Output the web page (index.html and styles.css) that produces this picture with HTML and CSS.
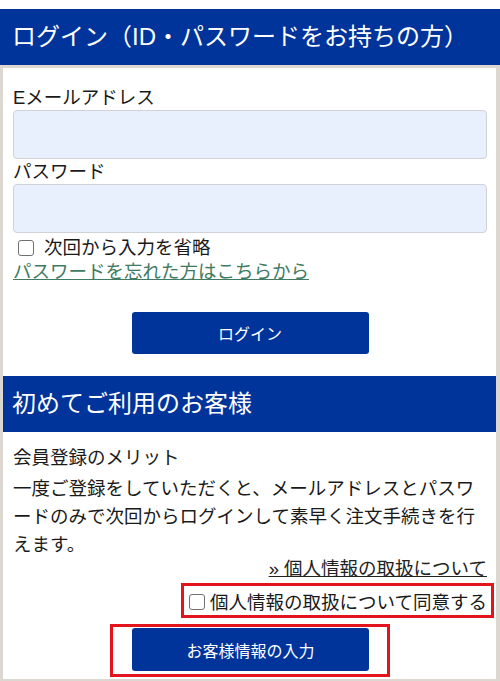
FILE: index.html
```html
<!DOCTYPE html>
<html lang="ja">
<head>
    <meta charset="UTF-8">
    <meta name="viewport" content="width=device-width, initial-scale=1.0">
    <title>ログイン</title>
    <link rel="stylesheet" href="styles.css">
</head>
<body>
<div class="top"></div>
<h2 class="head">ログイン（ID・パスワードをお持ちの方）</h2>
<div class="panel">
    <form class="login">
        <label class="fieldLabel" for="email">Eメールアドレス</label>
        <input id="email" class="field" type="email">
        <label class="fieldLabel" for="pass">パスワード</label>
        <input id="pass" class="field" type="password">
        <label class="remember"><input type="checkbox" class="check">次回から入力を省略</label>
        <a class="forgot" href="#">パスワードを忘れた方はこちらから</a>
        <div class="btnRow login-btn"><button type="button" class="btn">ログイン</button></div>
    </form>
    <h2 class="head headSub">初めてご利用のお客様</h2>
    <div class="guest">
        <p class="meritTitle">会員登録のメリット</p>
        <p class="meritText">一度ご登録をしていただくと、メールアドレスとパスワードのみで次回からログインして素早く注文手続きを行えます。</p>
        <p class="policy"><a href="#">» 個人情報の取扱について</a></p>
        <div class="agreeRow">
            <label class="agree mark"><input type="checkbox" class="check">個人情報の取扱について同意する</label>
        </div>
        <div class="btnRow">
            <div class="mark markBtn"><button type="button" class="btn btnTall">お客様情報の入力</button></div>
        </div>
    </div>
</div>
</body>
</html>
```

FILE: styles.css
```css
body {
    margin: 0;
    background: #dcd8d1;
    font-family: "Liberation Sans", "Noto Sans CJK JP", sans-serif;
    font-size: 18.5px;
    color: #1a1a1a;
}
.top {
    height: 9px;
    background: #fff;
}
.head {
    margin: 0;
    height: 56px;
    padding-left: 12px;
    background: #00349b;
    color: #fff;
    font-size: 24px;
    font-weight: normal;
    line-height: 56px;
    white-space: nowrap;
}
.panel {
    margin: 3px 4px 0 3px;
    padding-bottom: 2px;
    background: #fff;
}
.login {
    padding: 17px 9px 0 10px;
}
.fieldLabel {
    display: block;
    line-height: 25px;
}
.field {
    display: block;
    box-sizing: border-box;
    width: 100%;
    height: 49px;
    margin: 0;
    background: #e8f0fe;
    border: 1px solid #cfd2d6;
    border-radius: 4px;
}
.remember {
    display: flex;
    align-items: center;
    height: 26px;
    padding-left: 5px;
}
.remember .check {
    margin: 3px 10px 0 0;
}
.check {
    -webkit-appearance: none;
    appearance: none;
    flex: none;
    width: 16px;
    height: 16px;
    margin: 0;
    background: #fff;
    border: 1.5px solid #707070;
    border-radius: 3px;
}
.forgot {
    display: inline-block;
    line-height: 26px;
    color: #3f7b62;
}
.btnRow {
    display: flex;
    justify-content: center;
}
.login-btn {
    padding: 27px 0 22px;
}
.btn {
    width: 237px;
    height: 42px;
    margin: 0;
    background: #00349b;
    border: 0;
    border-radius: 3px;
    color: #fff;
    font-family: inherit;
    font-size: 16px;
}
.btnTall {
    height: 43px;
}
.headSub {
    padding-left: 9px;
}
.guest {
    padding: 13px 9px 0 10px;
}
.guest p {
    margin: 0;
}
.meritTitle {
    line-height: 26px;
}
.meritText {
    margin-top: 4px !important;
    line-height: 28px;
}
.policy {
    text-align: right;
    line-height: 20px;
}
.policy a {
    color: #222;
}
.mark {
    border: 3px solid #e3141b;
}
.agreeRow {
    display: flex;
    justify-content: flex-end;
    margin: 4px -7px 0 0;
}
.agree {
    display: flex;
    align-items: center;
    height: 29px;
    padding: 0 4px 0 5px;
}
.agree .check {
    margin: 2px 5px 0 0;
}
.btnRow .markBtn {
    margin-top: 6px;
    padding: 1px 18px 3px 19px;
}
```
